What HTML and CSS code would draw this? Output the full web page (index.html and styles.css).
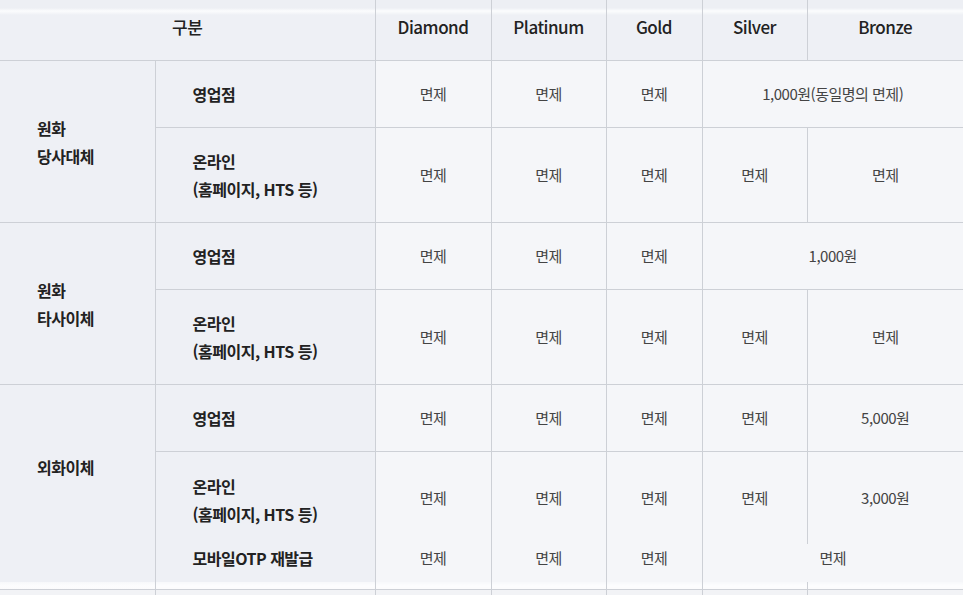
FILE: index.html
```html
<!DOCTYPE html>
<html lang="ko">
<head>
<meta charset="utf-8">
<title>이체수수료</title>
<link rel="stylesheet" href="styles.css">
</head>
<body>
<table class="fee">
  <colgroup>
    <col class="c-cat"><col class="c-sub"><col class="c-dia"><col class="c-pla"><col class="c-gol"><col class="c-sil"><col class="c-bro">
  </colgroup>
  <thead>
    <tr class="r-head">
      <th colspan="2">구분</th>
      <th>Diamond</th>
      <th>Platinum</th>
      <th>Gold</th>
      <th>Silver</th>
      <th>Bronze</th>
    </tr>
  </thead>
  <tbody>
    <tr class="r-short">
      <th rowspan="2" class="cat">원화<br>당사대체</th>
      <th class="sub">영업점</th>
      <td>면제</td><td>면제</td><td>면제</td>
      <td colspan="2">1,000원(동일명의 면제)</td>
    </tr>
    <tr class="r-tall">
      <th class="sub">온라인<br>(홈페이지, HTS 등)</th>
      <td>면제</td><td>면제</td><td>면제</td><td>면제</td><td>면제</td>
    </tr>
    <tr class="r-short">
      <th rowspan="2" class="cat">원화<br>타사이체</th>
      <th class="sub">영업점</th>
      <td>면제</td><td>면제</td><td>면제</td>
      <td colspan="2">1,000원</td>
    </tr>
    <tr class="r-tall">
      <th class="sub">온라인<br>(홈페이지, HTS 등)</th>
      <td>면제</td><td>면제</td><td>면제</td><td>면제</td><td>면제</td>
    </tr>
    <tr class="r-short">
      <th rowspan="3" class="cat cat-top">외화이체</th>
      <th class="sub">영업점</th>
      <td>면제</td><td>면제</td><td>면제</td><td>면제</td><td>5,000원</td>
    </tr>
    <tr class="r-online">
      <th class="sub">온라인<br>(홈페이지, HTS 등)</th>
      <td>면제</td><td>면제</td><td>면제</td><td>면제</td><td>3,000원</td>
    </tr>
    <tr class="r-otp">
      <th class="sub">모바일OTP 재발급</th>
      <td>면제</td><td>면제</td>
      <td>면제</td>
      <td colspan="2">면제</td>
    </tr>
    <tr class="r-tail">
      <td></td><td></td><td></td><td></td><td></td><td></td><td></td>
    </tr>
    <tr class="r-next">
      <td></td><td></td><td></td><td></td><td></td><td></td><td></td>
    </tr>
  </tbody>
</table>
</body>
</html>
```

FILE: styles.css
```css
html, body {
  margin: 0;
  padding: 0;
  background: #f5f6f9;
  overflow: hidden;
}

body {
  font-family: "Noto Sans CJK KR", "Noto Sans", sans-serif;
  color: #333;
  letter-spacing: -0.5px;
}

.fee {
  width: 963px;
  border-collapse: collapse;
  table-layout: fixed;
}

.c-cat { width: 155px; }
.c-sub { width: 220px; }
.c-dia { width: 116px; }
.c-pla { width: 115px; }
.c-gol { width: 96px; }
.c-sil { width: 105px; }
.c-bro { width: 156px; }

.fee th,
.fee td {
  border: 1px solid #cdd0d6;
  padding: 0;
  text-align: center;
  vertical-align: middle;
}

.fee tr > :first-child { border-left: none; }
.fee tr > :last-child { border-right: none; }

.fee td {
  background: #f5f6f9;
  font-size: 15px;
  line-height: 28px;
  color: #444;
  font-weight: 400;
}

.fee .r-head th {
  height: 47px;
  border-top: none;
  vertical-align: top;
  padding-top: 13px;
  font-size: 17px;
  line-height: 28px;
  font-weight: 500;
  color: #222;
  background: linear-gradient(#edeff4 0, #edeff4 8px, #fbfcfd 11px, #eef0f5 15px, #eef0f5 100%);
}

.fee .cat,
.fee .sub {
  background: #eef0f5;
  font-size: 16px;
  line-height: 28px;
  font-weight: 700;
  color: #222;
  text-align: left;
  padding-left: 37px;
}

.fee .cat-top {
  vertical-align: top;
  padding-top: 68px;
  border-bottom-style: hidden;
}

.r-short > * { height: 66px; }
.r-tall > * { height: 94px; }

.fee .r-online > * {
  height: 60px;
  vertical-align: top;
  padding-top: 32px;
  border-bottom-style: hidden;
}

.fee .r-online .sub {
  height: 72px;
  padding-top: 20px;
}

.fee .r-otp > * {
  height: 38px;
  vertical-align: top;
  padding-top: 0;
  border-top-style: hidden;
  border-bottom: none;
}

.fee .r-tail > * {
  height: 7px;
  border-top: none;
  background: linear-gradient(#f7f8fa 0, #fdfdfe 4px, #fbfbfc 100%);
}

.fee .r-next > * {
  height: 10px;
  background: #f2f3f6;
}
```
